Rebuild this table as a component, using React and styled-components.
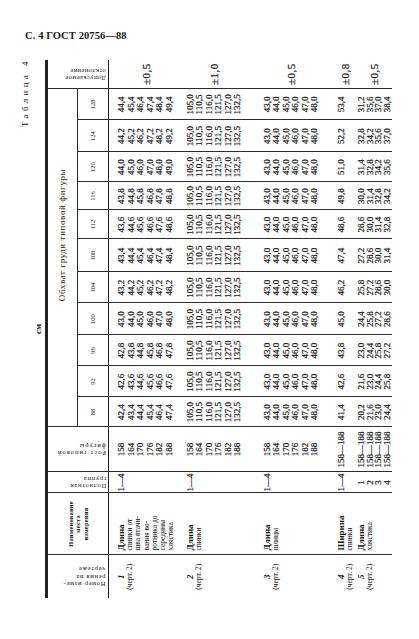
import React from "react";
import styled, { createGlobalStyle } from "styled-components";

const GlobalStyle = createGlobalStyle`
  html, body {
    margin: 0;
    padding: 0;
    background: #fff;
    overflow: hidden;
  }
  body {
    font-family: "Liberation Serif", "DejaVu Serif", serif;
    color: #141414;
  }
`;

const Page = styled.div`
  width: 419px;
  height: 639px;
  box-sizing: border-box;
  padding-top: 30px;
  background: #fff;
`;

const RunningHead = styled.div`
  margin-left: 25px;
  font-size: 10.5px;
  font-weight: bold;
  line-height: 12px;
  letter-spacing: 0.1px;
`;

// the table is printed turned on its side: Sheet reserves the space on the page,
// Turned holds the table in its own reading orientation
const Sheet = styled.div`
  width: 377px;
  height: 542px;
  margin: 16px 0 0 18px;
`;

const Turned = styled.div`
  width: 542px;
  height: 377px;
  transform-origin: 0 0;
  transform: translateY(542px) rotate(-90deg);
`;

const TableTitle = styled.div`
  text-align: right;
  font-size: 9px;
  line-height: 14px;
  letter-spacing: 3.4px;
`;

const Unit = styled.div`
  text-align: center;
  font-size: 9px;
  font-weight: bold;
  line-height: 13px;
`;

const Grid = styled.table`
  width: 538px;
  margin-left: 2px;
  border-collapse: collapse;
  table-layout: fixed;
  border-top: 3px solid #222;
`;

const HeadCell = styled.th`
  border-left: 1px solid #2c2c2c;
  border-bottom: 1px solid #1e1e1e;
  padding: 0;
  font-weight: normal;
  font-size: 6.5px;
  line-height: 7.5px;
  vertical-align: bottom;
  height: ${(p) => p.$h}px;
`;

const LeadHead = styled(HeadCell)`
  border-left: none;
`;

const NameHead = styled(HeadCell)`
  vertical-align: middle;
`;

const HeadBox = styled.div`
  height: ${(p) => p.$h}px;
  display: flex;
  justify-content: center;
  align-items: flex-end;
  padding-bottom: 2px;
  box-sizing: border-box;
`;

const Sideways = styled.div`
  writing-mode: vertical-rl;
  transform: rotate(180deg);
  text-align: start;
  white-space: nowrap;
  letter-spacing: ${(p) => p.$ls ?? 0.7}px;
  line-height: 7.5px;
`;

const HeadText = styled.div`
  text-align: center;
  font-weight: bold;
  font-size: 6.5px;
  line-height: 7.5px;
  letter-spacing: 0.2px;
`;

const GirthHead = styled(HeadCell)`
  font-size: 9px;
  letter-spacing: 0.6px;
  vertical-align: middle;
  padding-left: 46px;
  border-bottom: 1px solid #2c2c2c;
`;

const SizeHead = styled(HeadCell)`
  font-size: 6.5px;
  vertical-align: middle;
`;

const Cell = styled.td`
  border-left: 1px solid #2c2c2c;
  padding: ${(p) => p.$pad}px 1px 1px;
  vertical-align: top;
  text-align: center;
  font-size: 9px;
  line-height: ${(p) => p.$lh}px;
  white-space: nowrap;
  -webkit-text-stroke: 0.2px #141414;
`;

const NumberCell = styled(Cell)`
  border-left: none;
  font-size: 7.5px;
  line-height: 8.5px;
  -webkit-text-stroke: 0;
`;

const NameCell = styled(Cell)`
  text-align: left;
  padding-left: 4px;
  font-size: 7.5px;
  line-height: 8.3px;
  -webkit-text-stroke: 0;
`;

const ToleranceCell = styled(Cell)`
  vertical-align: middle;
  font-size: 11px;
  letter-spacing: 0.5px;
`;

const Title = styled.div`
  font-size: 9px;
  font-weight: bold;
  line-height: 9px;
`;

const Num = styled.div`
  font-size: 9px;
  font-weight: bold;
  font-style: italic;
  line-height: 9px;
`;

const Line = styled.div``;

const SIZES = [88, 92, 96, 100, 104, 108, 112, 116, 120, 124, 128];
const SIZE_WIDTHS = [30, 31, 31, 32, 31, 33, 29, 28, 30, 32, 31];
const HEIGHTS = ["158", "164", "170", "176", "182", "188"];

const fmt = (v) => v.toFixed(1).replace(".", ",");
const range = (n, f) => Array.from({ length: n }, (_, k) => f(k));

const ROWS = [
  {
    num: "1",
    title: "Длина",
    name: ["спинки от", "шва втачи-", "вания во-", "ротника до", "середины", "хлястика"],
    groups: ["1—4"],
    heights: HEIGHTS,
    values: SIZES.map((_, i) => range(6, (k) => fmt(42.4 + 0.2 * i + k))),
    tol: "±0,5",
    pad: 8,
    lh: 9.5,
  },
  {
    num: "2",
    title: "Длина",
    name: ["спинки"],
    groups: ["1—4"],
    heights: HEIGHTS,
    values: SIZES.map(() => ["105,0", "110,5", "116,0", "121,5", "127,0", "132,5"]),
    tol: "±1,0",
    pad: 9,
    lh: 9.5,
  },
  {
    num: "3",
    title: "Длина",
    name: ["шлицы"],
    groups: ["1—4"],
    heights: HEIGHTS,
    values: SIZES.map(() => range(6, (k) => fmt(43 + k))),
    tol: "±0,5",
    pad: 19,
    lh: 9.5,
  },
  {
    num: "4",
    title: "Ширина",
    name: ["спинки"],
    groups: ["1—4"],
    heights: ["158—188"],
    values: SIZES.map((_, i) => [fmt(41.4 + 1.2 * i)]),
    tol: "±0,8",
    pad: 16,
    lh: 9,
  },
  {
    num: "5",
    title: "Длина",
    name: ["хлястика"],
    groups: ["1", "2", "3", "4"],
    heights: range(4, () => "158—188"),
    values: SIZES.map((_, i) =>
      range(4, (k) => (i === 10 && k === 0 ? "31,2" : fmt(20.2 + 1.4 * (i + k))))
    ),
    tol: "±0,5",
    pad: 2,
    lh: 8.5,
  },
];

const Lines = ({ items }) =>
  items.map((t, k) => <Line key={k}>{t}</Line>);

const Header = () => (
  <thead>
    <tr>
      <LeadHead rowSpan={2} $h={29}>
        <HeadBox $h={58}>
          <Sideways>
            Номер изме-
            <br />
            рения на
            <br />
            чертеже
          </Sideways>
        </HeadBox>
      </LeadHead>
      <NameHead rowSpan={2} $h={29}>
        <HeadText>
          Наименование
          <br />
          места
          <br />
          измерения
        </HeadText>
      </NameHead>
      <HeadCell rowSpan={2} $h={29}>
        <HeadBox $h={58}>
          <Sideways>
            Полнотная
            <br />
            группа
          </Sideways>
        </HeadBox>
      </HeadCell>
      <HeadCell rowSpan={2} $h={29}>
        <HeadBox $h={58}>
          <Sideways $ls={1}>
            Рост типовой
            <br />
            фигуры
          </Sideways>
        </HeadBox>
      </HeadCell>
      <GirthHead colSpan={11} $h={29}>
        Обхват груди типовой фигуры
      </GirthHead>
      <HeadCell rowSpan={2} $h={29}>
        <HeadBox $h={58}>
          <Sideways $ls={0.4}>
            Допускаемое
            <br />
            отклонение
          </Sideways>
        </HeadBox>
      </HeadCell>
    </tr>
    <tr>
      {SIZES.map((s) => (
        <SizeHead key={s} $h={30}>
          {s}
        </SizeHead>
      ))}
    </tr>
  </thead>
);

const Row = ({ row }) => (
  <tr>
    <NumberCell $pad={row.pad} $lh={8.5}>
      <Num>{row.num}</Num>
      (черт. 2)
    </NumberCell>
    <NameCell $pad={row.pad} $lh={8.3}>
      <Title>{row.title}</Title>
      <Lines items={row.name} />
    </NameCell>
    <Cell $pad={row.pad} $lh={row.lh}>
      <Lines items={row.groups} />
    </Cell>
    <Cell $pad={row.pad} $lh={row.lh}>
      <Lines items={row.heights} />
    </Cell>
    {row.values.map((vals, i) => (
      <Cell key={i} $pad={row.pad} $lh={row.lh}>
        <Lines items={vals} />
      </Cell>
    ))}
    <ToleranceCell $pad={row.pad} $lh={row.lh}>
      {row.tol}
    </ToleranceCell>
  </tr>
);

const App = () => (
  <>
    <GlobalStyle />
    <Page>
      <RunningHead>С. 4 ГОСТ 20756—88</RunningHead>
      <Sheet>
        <Turned>
          <TableTitle>Таблица 4</TableTitle>
          <Unit>см</Unit>
          <Grid>
            <colgroup>
              <col style={{ width: 43 }} />
              <col style={{ width: 62 }} />
              <col style={{ width: 21 }} />
              <col style={{ width: 45 }} />
              {SIZE_WIDTHS.map((w, i) => (
                <col key={i} style={{ width: w }} />
              ))}
              <col style={{ width: 29 }} />
            </colgroup>
            <Header />
            <tbody>
              {ROWS.map((r) => (
                <Row key={r.num} row={r} />
              ))}
            </tbody>
          </Grid>
        </Turned>
      </Sheet>
    </Page>
  </>
);

export default App;
